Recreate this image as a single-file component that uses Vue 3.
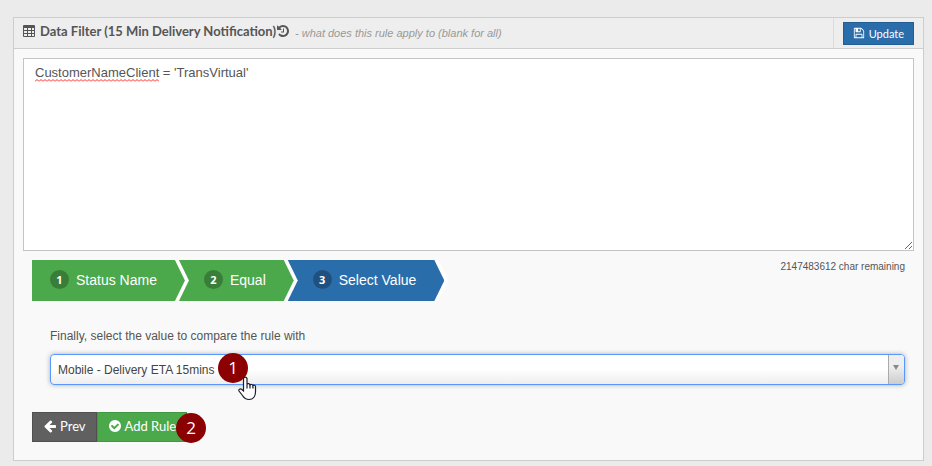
<template>
  <section class="panel">
    <header class="panel-header">
      <h2 class="panel-title">
        <svg class="icon" viewBox="0 0 14 14" aria-hidden="true">
          <path
            fill-rule="evenodd"
            d="M2 1h10a1 1 0 0 1 1 1v10a1 1 0 0 1-1 1H2a1 1 0 0 1-1-1V2a1 1 0 0 1 1-1zM2 4v2h3V4zM6 4v2h3V4zM10 4v2h2V4zM2 7v2h3V7zM6 7v2h3V7zM10 7v2h2V7zM2 10v2h3v-2zM6 10v2h3v-2zM10 10v2h2v-2z"
          />
        </svg>
        <span class="panel-name">{{ titulo }}</span>
        <svg class="icon" viewBox="0 0 1792 1792" aria-hidden="true">
          <path :d="iconos.history" />
        </svg>
      </h2>
      <span class="panel-hint">- what does this rule apply to (blank for all)</span>
      <div class="panel-tools">
        <button type="button" class="btn btn-update">
          <svg class="icon" viewBox="0 0 1792 1792" aria-hidden="true">
            <path :d="iconos.save" />
          </svg>
          Update
        </button>
      </div>
    </header>

    <div class="panel-body">
      <div class="editor">
        <textarea v-model="regla" class="editor-input" aria-label="Data filter" spellcheck="false"></textarea>
        <div class="editor-marks" aria-hidden="true"><span class="misspelled">{{ campo }}</span></div>
      </div>

      <div class="wizard">
        <div class="wizard-top">
          <ol class="steps">
            <li
              v-for="(paso, i) in pasos"
              :key="paso"
              class="step"
              :class="{ active: i === actual }"
              :style="{ zIndex: pasos.length - i }"
            >
              <button type="button" class="step-btn" @click="actual = i">
                <span class="step-badge">{{ i + 1 }}</span>
                {{ paso }}
              </button>
            </li>
          </ol>
          <span class="remaining">{{ restantes }} char remaining</span>
        </div>

        <div class="step-content">
          <label for="valor" class="step-label">Finally, select the value to compare the rule with</label>
          <div class="select-wrap">
            <select id="valor" v-model="valor" class="select">
              <option v-for="op in opciones" :key="op" :value="op">{{ op }}</option>
            </select>
            <span class="select-arrow" aria-hidden="true"></span>
            <span class="callout callout-select">1</span>
            <svg class="cursor" viewBox="0 0 20 26" aria-hidden="true">
              <path
                d="M6.500 16V3.500a1.800 1.800 0 0 1 3.500 0V9.500a1.600 1.600 0 0 1 3 .6 1.600 1.600 0 0 1 2.900.8 1.400 1.400 0 0 1 2.600.9V17c0 4.500-2.500 7.500-6.500 7.500-3.500 0-5-1.500-6.500-4L2 16c-.8-1.500 1.200-2.800 2.500-1.700z"
              />
              <path d="M10 9.500v4M13 10.500v3M16 11.500v2" />
            </svg>
          </div>
        </div>

        <div class="actions">
          <button type="button" class="btn btn-prev" @click="anterior">
            <svg class="icon" viewBox="0 0 1792 1792" aria-hidden="true">
              <path :d="iconos.left" />
            </svg>
            Prev
          </button>
          <button type="button" class="btn btn-add">
            <svg class="icon" viewBox="0 0 1792 1792" aria-hidden="true">
              <path :d="iconos.check" />
            </svg>
            Add Rule
          </button>
          <span class="callout callout-add">2</span>
        </div>
      </div>
    </div>
  </section>
</template>

<script setup>
import { ref, computed } from 'vue'

const MAX_CHARS = 2147483647

const titulo = 'Data Filter (15 Min Delivery Notification)'
const regla = ref("CustomerNameClient = 'TransVirtual'")
const pasos = ['Status Name', 'Equal', 'Select Value']
const actual = ref(2)
const opciones = ['Mobile - Delivery ETA 15mins']
const valor = ref(opciones[0])

const campo = computed(() => regla.value.split(' ')[0])
const restantes = computed(() => MAX_CHARS - regla.value.length)

function anterior() {
  if (actual.value > 0) actual.value--
}

const iconos = {
  history:
    'M1664 896q0 156-61 298t-164 245-245 164-298 61q-172 0-327-72.5t-264-204.5q-7-10-6.500-22.500t8.500-20.500l137-138q10-9 25-9 16 2 23 12 73 95 179 147t225 52q104 0 198.500-40.500t163.500-109.500 109.500-163.500 40.500-198.500-40.500-198.500-109.500-163.500-163.500-109.500-198.500-40.500q-98 0-188 35.500t-160 101.500l137 138q31 30 14 69-17 40-59 40h-448q-26 0-45-19t-19-45v-448q0-42 40-59 39-17 69 14l130 129q107-101 244.500-156.500t284.500-55.500q156 0 298 61t245 164 164 245 61 298zm-640-288v448q0 14-9 23t-23 9h-320q-14 0-23-9t-9-23v-64q0-14 9-23t23-9h224v-352q0-14 9-23t23-9h64q14 0 23 9t9 23z',
  save: 'M512 1536h768v-384h-768v384zm896 0h128v-896q0-14-10-38.500t-20-34.500l-281-281q-10-10-34-20t-39-10v416q0 40-28 68t-68 28h-576q-40 0-68-28t-28-68v-416h-128v1280h128v-416q0-40 28-68t68-28h832q40 0 68 28t28 68v416zm-384-928v-320q0-13-9.500-22.500t-22.500-9.500h-192q-13 0-22.500 9.500t-9.500 22.500v320q0 13 9.500 22.500t22.500 9.500h192q13 0 22.500-9.500t9.500-22.500zm640 32v928q0 40-28 68t-68 28h-1344q-40 0-68-28t-28-68v-1344q0-40 28-68t68-28h928q40 0 88 20t76 48l280 280q28 28 48 76t20 88z',
  left: 'M1664 896v128q0 53-32.500 90.500t-84.500 37.500h-704l293 294q38 36 38 90t-38 90l-75 76q-37 37-90 37-52 0-91-37l-651-652q-37-37-37-90 0-52 37-91l651-650q38-38 91-38 52 0 90 38l75 74q38 38 38 91t-38 91l-293 293h704q52 0 84.500 37.500t32.500 90.500z',
  check:
    'M1412 734q0-28-18-46l-91-90q-19-19-45-19t-45 19l-408 407-226-226q-19-19-45-19t-45 19l-91 90q-18 18-18 46 0 27 18 45l362 362q19 19 45 19 27 0 46-19l543-543q18-18 18-45zm252 162q0 209-103 385.500t-279.500 279.500-385.500 103-385.500-103-279.500-279.500-103-385.500 103-385.500 279.500-279.500 385.500-103 385.500 103 279.500 279.500 103 385.500z',
}
</script>

<style>
body {
  background: #ebebeb;
}
</style>

<style scoped>
.panel {
  margin: 17px 8px 0 13px;
  border: 1px solid #cdcdcd;
  background: #f9f9f9;
  font-family: 'Liberation Sans', Arial, sans-serif;
  font-size: 12px;
  color: #555;
}
.icon {
  width: 14px;
  height: 14px;
  flex: none;
  fill: currentColor;
}

/* Cabecera */
.panel-header {
  display: flex;
  align-items: center;
  height: 30px;
  padding-left: 8px;
  background: #eee;
  border-bottom: 1px solid #cdcdcd;
}
.panel-title {
  display: flex;
  align-items: center;
  margin: 0;
  padding-bottom: 4px;
  font-family: Lato, sans-serif;
  font-size: 13px;
  line-height: 20px;
  font-weight: 700;
}
.panel-name {
  margin-left: 4px;
}
.panel-hint {
  margin-left: 5px;
  font-size: 11px;
  line-height: 20px;
  font-style: italic;
  color: #999;
}
.panel-tools {
  display: flex;
  align-items: center;
  align-self: stretch;
  margin-left: auto;
  padding: 0 9px;
  border-left: 1px solid #dcdcdc;
}
.btn {
  display: inline-flex;
  align-items: center;
  border: 1px solid;
  color: #fff;
  font-family: Lato, sans-serif;
  font-size: 13px;
  cursor: pointer;
}
.btn-update {
  gap: 4px;
  height: 23px;
  padding: 0 9px;
  font-size: 11px;
  background: #2a6dab;
  border-color: #235d94;
}
.btn-update .icon {
  width: 12px;
  height: 12px;
}

/* Editor de la regla */
.panel-body {
  padding: 9px 9px 18px;
}
.editor {
  position: relative;
  display: flex;
}
.editor-input,
.editor-marks {
  box-sizing: border-box;
  width: 100%;
  padding: 4px 11px;
  border: 1px solid #c4c4c4;
  font-family: 'Liberation Sans', Arial, sans-serif;
  font-size: 13px;
  line-height: 20px;
}
.editor-input {
  height: 193px;
  margin: 0;
  background: #fff;
  color: #555;
  outline: none;
  resize: vertical;
}
.editor-marks {
  position: absolute;
  inset: 0;
  border-color: transparent;
  color: transparent;
  pointer-events: none;
}
.misspelled {
  padding-bottom: 2px;
  background: url("data:image/svg+xml,%3Csvg xmlns='http://www.w3.org/2000/svg' width='4' height='3'%3E%3Cpath d='M0 2.500L2 .5L4 2.500' fill='none' stroke='%23f22'/%3E%3C/svg%3E")
    0 100% repeat-x;
}

/* Pasos */
.wizard {
  padding: 9px 9px 0;
}
.wizard-top {
  display: flex;
  justify-content: space-between;
  align-items: flex-start;
}
.steps {
  display: flex;
  margin: 0;
  padding: 0;
  list-style: none;
}
.step {
  position: relative;
  padding-right: 4px;
  background: #fff;
  clip-path: polygon(0 0, calc(100% - 10px) 0, 100% 50%, calc(100% - 10px) 100%, 0 100%);
}
.step + .step {
  margin-left: -11px;
}
.step-btn {
  display: flex;
  align-items: center;
  height: 41px;
  padding: 0 28px 2px 18px;
  border: 0;
  background: #4ba84b;
  color: #fff;
  font-family: 'Liberation Sans', Arial, sans-serif;
  font-size: 14px;
  clip-path: polygon(0 0, calc(100% - 10px) 0, 100% 50%, calc(100% - 10px) 100%, 0 100%);
  cursor: pointer;
}
.step + .step .step-btn {
  padding-left: 26px;
}
.step.active .step-btn {
  background: #2a6dab;
}
.step-badge {
  width: 19px;
  height: 19px;
  margin-right: 7px;
  border-radius: 50%;
  background: rgba(0, 0, 0, 0.25);
  font-family: 'Open Sans', sans-serif;
  font-size: 11px;
  line-height: 19px;
  font-weight: 700;
  text-align: center;
}
.remaining {
  font-size: 10px;
  line-height: 14px;
}

/* Valor */
.step-content {
  display: flex;
  flex-direction: column;
  padding: 25px 0 27px 18px;
}
.step-label {
  margin-bottom: 8px;
  line-height: 20px;
}
.select-wrap {
  position: relative;
  display: flex;
}
.select {
  flex: 1;
  height: 31px;
  padding: 0 24px 0 7px;
  border: 1px solid #5897fb;
  border-radius: 4px;
  background: linear-gradient(#fff 50%, #eee);
  box-shadow: 0 0 5px rgba(0, 0, 0, 0.3);
  color: #444;
  font-family: 'Liberation Sans', Arial, sans-serif;
  font-size: 12px;
  outline: none;
  appearance: none;
}
.select-arrow {
  position: absolute;
  top: 1px;
  right: 1px;
  bottom: 1px;
  width: 15px;
  border-left: 1px solid #aaa;
  border-radius: 0 3px 3px 0;
  background: linear-gradient(#eee 40%, #ccc);
  pointer-events: none;
}
.select-arrow::after {
  content: '';
  position: absolute;
  top: 10px;
  left: 4px;
  border: 3px solid transparent;
  border-top: 5px solid #888;
  border-bottom: 0;
}

/* Marcadores */
.callout {
  position: absolute;
  width: 30px;
  height: 30px;
  border-radius: 50%;
  background: #8b0000;
  color: #fff;
  font-family: 'Open Sans', sans-serif;
  font-size: 17px;
  line-height: 29px;
  text-align: center;
}
.callout-select {
  top: -1px;
  left: 168px;
}
.callout-add {
  top: 1px;
  left: 144px;
}
.cursor {
  position: absolute;
  top: 21px;
  left: 187px;
  width: 20px;
  height: 26px;
  fill: #fff;
  stroke: #1c1c2c;
  stroke-width: 1.2;
}

.actions {
  position: relative;
  display: flex;
}
.btn-prev,
.btn-add {
  gap: 3px;
  height: 30px;
  padding: 0 10px 3px;
}
.btn-prev {
  background: #606060;
  border-color: #505050;
}
.btn-add {
  background: #4ba84b;
  border-color: #429742;
}
</style>
